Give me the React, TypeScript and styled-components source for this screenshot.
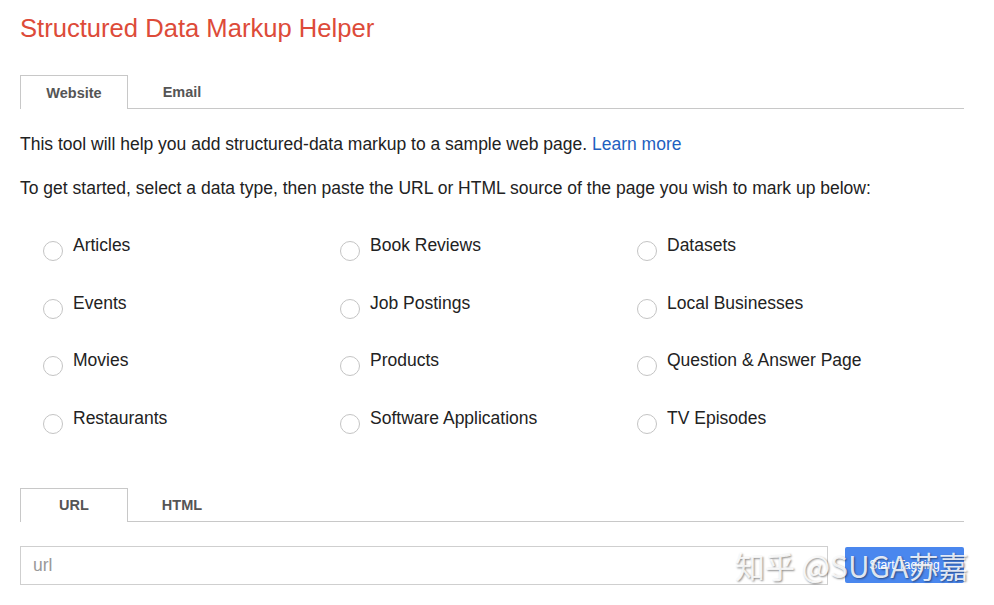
import React from "react";
import styled, { createGlobalStyle } from "styled-components";

const Global = createGlobalStyle`
  html, body { margin: 0; padding: 0; background: #fff; }
  body { font-family: Arial, "Liberation Sans", sans-serif; color: #222; }
`;

const Page = styled.div`
  width: 944px;
  padding: 0 0 0 20px;
  position: relative;
`;

const Title = styled.h1`
  margin: 0;
  padding-top: 13px;
  font-size: 25.6px;
  font-weight: normal;
  line-height: 30px;
  color: #dd4b39;
`;

const TabBar = styled.div<{ $top: number }>`
  display: flex;
  margin-top: ${(p) => p.$top}px;
  height: 33px;
  border-bottom: 1px solid #c8c8c8;
`;

const Tab = styled.div<{ $active?: boolean }>`
  width: 108px;
  height: ${(p) => (p.$active ? "34px" : "33px")};
  box-sizing: border-box;
  display: flex;
  align-items: center;
  justify-content: center;
  font-size: 14.5px;
  font-weight: bold;
  color: #555;
  background: #fff;
  border: 1px solid ${(p) => (p.$active ? "#c8c8c8" : "transparent")};
  border-bottom: none;
  padding-bottom: 0px;
`;

const Para = styled.p<{ $top: number }>`
  margin: ${(p) => p.$top}px 0 0;
  font-size: 17.5px;
  line-height: 20px;
  color: #222;
`;

const Link = styled.a`
  color: #1f5fbf;
  text-decoration: none;
`;

const Grid = styled.div`
  display: grid;
  grid-template-columns: 297px 297px 297px;
  grid-auto-rows: 57.7px;
  margin-top: 37px;
  padding-left: 23px;
`;

const Option = styled.label`
  display: flex;
  align-items: flex-start;
  gap: 10px;
  font-size: 17.5px;
  line-height: 20px;
  color: #222;
`;

const Radio = styled.span`
  width: 20px;
  height: 20px;
  margin-top: 6px;
  border-radius: 50%;
  border: 1px solid #c4c4c4;
  box-sizing: border-box;
  flex: none;
`;

const InputRow = styled.div`
  display: flex;
  align-items: center;
  margin-top: 24px;
  gap: 17px;
`;

const UrlInput = styled.div`
  width: 808px;
  height: 39px;
  box-sizing: border-box;
  border: 1px solid #cfcfcf;
  display: flex;
  align-items: center;
  padding-left: 12px;
  font-size: 17.5px;
  color: #999;
`;

const Button = styled.div`
  width: 119px;
  height: 36px;
  border-radius: 2px;
  background: #4a87ee;
  color: #fff;
  font-size: 12px;
  display: flex;
  align-items: center;
  justify-content: center;
`;

const Watermark = styled.div`
  position: absolute;
  left: 735px;
  top: 545px;
  font-family: "Noto Sans CJK SC", sans-serif;
  font-size: 30px;
  line-height: 40px;
  color: rgba(255, 255, 255, 0.85);
  text-shadow: 1px 1px 2px rgba(0, 0, 0, 0.45);
  white-space: nowrap;
`;

const options = [
  "Articles", "Book Reviews", "Datasets",
  "Events", "Job Postings", "Local Businesses",
  "Movies", "Products", "Question & Answer Page",
  "Restaurants", "Software Applications", "TV Episodes",
];

export default function App() {
  return (
    <Page>
      <Global />
      <Title>Structured Data Markup Helper</Title>
      <TabBar $top={32}>
        <Tab $active>Website</Tab>
        <Tab>Email</Tab>
      </TabBar>
      <Para $top={25}>
        This tool will help you add structured-data markup to a sample web page.{" "}
        <Link href="#">Learn more</Link>
      </Para>
      <Para $top={24}>
        To get started, select a data type, then paste the URL or HTML source of the page you wish to mark up below:
      </Para>
      <Grid>
        {options.map((o) => (
          <Option key={o}>
            <Radio />
            {o}
          </Option>
        ))}
      </Grid>
      <TabBar $top={22}>
        <Tab $active>URL</Tab>
        <Tab>HTML</Tab>
      </TabBar>
      <InputRow>
        <UrlInput>url</UrlInput>
        <Button>Start Tagging</Button>
      </InputRow>
      <Watermark>知乎 @SUGA苏嘉</Watermark>
    </Page>
  );
}
